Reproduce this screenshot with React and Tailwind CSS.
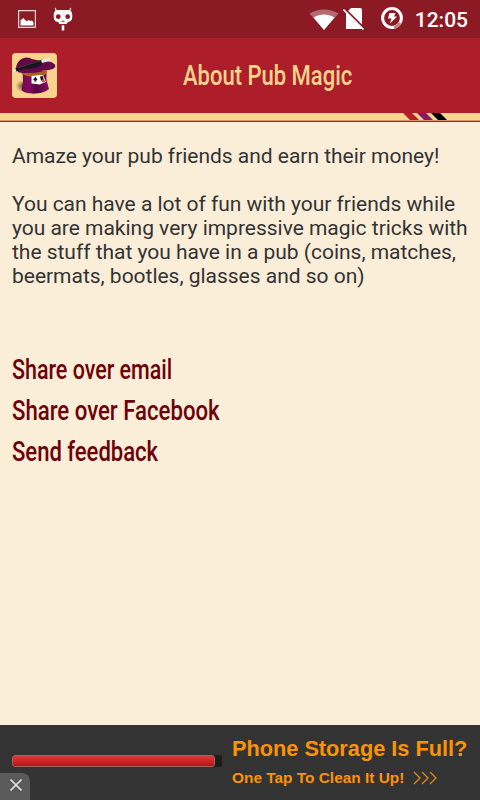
import clsx from "clsx";

const links = [
  { label: "Share over email", stretch: "scale-x-[0.767]" },
  { label: "Share over Facebook", stretch: "scale-x-[0.793]" },
  { label: "Send feedback", stretch: "scale-x-[0.788]" },
];

const HatLogo = () => (
  <svg viewBox="0 0 45 45" className="h-[45px] w-[45px] rounded-[4px] bg-[#f9d38c]">
    <defs>
      <linearGradient id="crown" x1="0" x2="1">
        <stop offset="0" stopColor="#6d0850" />
        <stop offset="0.25" stopColor="#850b62" />
        <stop offset="0.55" stopColor="#58063f" />
        <stop offset="1" stopColor="#870f64" />
      </linearGradient>
      <radialGradient id="shade">
        <stop offset="0" stopColor="#76532e" />
        <stop offset="1" stopColor="#f9d38c" />
      </radialGradient>
    </defs>
    <ellipse cx="10.500" cy="33" rx="7" ry="6" fill="url(#shade)" />
    <path d="M10.500 18 11 28 9.500 37C13 42 31 42 37 36L34.500 27V18Z" fill="url(#crown)" />
    <path d="M9 19C17 21 27 20 35 17L34 21C29 25 16 25 10 21Z" fill="#ab611f" />
    <path d="M4 15C5 7 12 3 18 5C22 8 32 7 39 9C46 12 44 16 37 17C25 18 13 22 6 19Z" fill="#650848" />
    <path d="M13 14C18 10 26 9 31 11C27 15 19 16 13 16Z" fill="#21102e" />
    <path d="M3 17.200 31 8" stroke="#151515" strokeWidth="3.200" />
    <path d="M6 15 29 7.500" stroke="#555" strokeWidth="0.600" />
    <path d="m29.500 8.500 8.500-2.300M1 18l3-1.200" stroke="#e8e6e8" strokeWidth="3" />
    <path d="m19.500 23 8.500-1v9.500l-8.500-1Z" fill="#fff" />
    <path d="m28 22 3 0 3 7-6.500 2.500Z" fill="#f4ecee" />
    <path d="m23.500 23.500 2 3.500-1.500.3.600 1.200h-2.600l.6-1.200-1.500-.3ZM28 23.500l3-.5.5 3.500-2.500 1Z" fill="#171717" />
    <path d="m29 27.500 3-1.500 1 3-2 .5Z" fill="#dd3f50" />
  </svg>
);

const PictureIcon = () => (
  <svg viewBox="0 0 18 18" className="h-[18px] w-[18px]">
    <path d="M.6.6h16.800v16.800H.6Z" fill="none" stroke="#efd9dc" strokeWidth="1.200" />
    <path d="M2.500 15.500V10.500L4 9 5.500 8l2 2.500 1.500.5L11 10l1 1 2-.5 1.500 2v3Z" fill="#fff" />
  </svg>
);

const CidIcon = () => (
  <svg viewBox="0 0 20 24" className="h-[24px] w-[20px]">
    <path d="M3.500 5 2.300.8M16.500 5l1.200-4.200" stroke="#f3dfe1" strokeWidth="1.200" />
    <path
      fillRule="evenodd"
      fill="#fff"
      d="M5 3h10c3 0 4.300 2 4.300 6s-1.300 5.500-4.300 6l-1.500 2h-7L5 15C2 14.500.7 13 .7 9S2 3 5 3ZM5.300 7.300a2.400 2.400 0 1 0 0 4.800 2.400 2.400 0 0 0 0-4.800Zm9.400 0a2.400 2.400 0 1 0 0 4.800 2.400 2.400 0 0 0 0-4.800ZM8.500 13.800v.9h3v-.9Z"
    />
    <path d="M10 18.300v5.200" stroke="#fff" strokeWidth="2.500" />
  </svg>
);

const WifiIcon = () => (
  <svg viewBox="0 0 30 21" className="h-[21px] w-[30px]">
    <path d="M.5 4.500C10-1 20-1 29.500 4.500L15 21Z" fill="#b36a71" />
    <path d="M4.500 8.500C11 4.500 19 4.500 25.500 8.500L15 21Z" fill="#fff" />
  </svg>
);

const NoSimIcon = () => (
  <svg viewBox="0 0 22 22" className="h-[22px] w-[22px]">
    <path d="M8 0h9q2 0 2 2v19H3V5Z" fill="#fff" />
    <path d="M1.500.5 22 21" stroke="#8b1a24" strokeWidth="2" />
    <path d="M.5 1.500 20.500 21.500" stroke="#fff" strokeWidth="1.600" />
  </svg>
);

const BatteryIcon = () => (
  <svg viewBox="0 0 22 22" className="h-[22px] w-[22px]">
    <circle cx="11" cy="11" r="9.400" fill="none" stroke="#fff" strokeWidth="3" />
    <path d="M13 20.300A9.400 9.400 0 0 0 19 16" fill="none" stroke="#bf8086" strokeWidth="3" />
    <path d="M8.500 6h6l-1.500 3.500h3L9 16.500l1.500-5H7Z" fill="#fff" />
  </svg>
);

const App = () => {
  return (
    <div className="flex h-[800px] w-[480px] flex-col overflow-hidden bg-[#fbeed9] font-['Roboto',sans-serif]">
      {/* Status bar */}
      <div className="flex h-[38px] shrink-0 items-center bg-[#8b1a24] pr-3 pl-[18px]">
        <PictureIcon />
        <div className="ml-[17px]">
          <CidIcon />
        </div>
        <div className="ml-auto flex items-center">
          <WifiIcon />
          <div className="ml-[4px]">
            <NoSimIcon />
          </div>
          <div className="mb-[2px] ml-[16px]">
            <BatteryIcon />
          </div>
          <span className="ml-[12px] pt-[2px] text-[21px] leading-[24px] font-medium text-white">
            12:05
          </span>
        </div>
      </div>

      {/* Header */}
      <div className="flex h-[75px] shrink-0 items-center bg-[#ae1e2a] pl-3">
        <HatLogo />
        <h1 className="ml-[126px] origin-left scale-x-[0.815] pt-[2px] text-[27px] font-medium whitespace-nowrap text-[#f9d38c]">
          About Pub Magic
        </h1>
      </div>
      <div className="shrink-0 border-b border-[#ae1e2a]">
        <div className="flex h-[8px] justify-end border-b border-[#dd946a] bg-[#f9d38c] pr-[33px]">
          <svg viewBox="0 0 44 7" className="h-[7px] w-[44px]">
            <path d="M0 0h9l7 7H7Z" fill="#b71f29" />
            <path d="M14 0h9l7 7h-9Z" fill="#86195f" />
            <path d="M28 0h9l7 7h-9Z" fill="#000" />
          </svg>
        </div>
      </div>

      {/* Description */}
      <div className="flex-1 px-3 pt-[22px] text-[21px] leading-[24px] tracking-[-0.02px] text-[#333]">
        <p>Amaze your pub friends and earn their money!</p>
        <p className="mt-6 whitespace-nowrap">
          You can have a lot of fun with your friends while
          <br />
          you are making very impressive magic tricks with
          <br />
          the stuff that you have in a pub (coins, matches,
          <br />
          beermats, bootles, glasses and so on)
        </p>
        <div className="mt-[61px] flex flex-col items-start">
          {links.map((link) => (
            <button
              key={link.label}
              className={clsx(
                "h-[41px] origin-left text-[28px] leading-[41px] font-medium whitespace-nowrap text-[#6d0208]",
                link.stretch
              )}
            >
              {link.label}
            </button>
          ))}
        </div>
      </div>

      {/* Ad banner */}
      <div className="relative flex h-[75px] shrink-0 bg-[#333] font-['Liberation_Sans',sans-serif] text-[#fb9405]">
        <div className="mt-[30px] ml-3 h-[12px] w-[210px] rounded-[2px] bg-[#1d1d1d]">
          <div className="h-full w-[203px] rounded-[3px] border border-[#a46464] bg-linear-to-b from-[#d93b3b] via-[#cf2525] to-[#b91212]" />
        </div>
        <div className="ml-[10px] whitespace-nowrap">
          <div className="mt-[11px] origin-left scale-x-[0.987] text-[22px] leading-[26px] font-bold">
            Phone Storage Is Full?
          </div>
          <div className="mt-[6px] flex items-center">
            <span className="origin-left scale-x-[1.027] text-[15px] leading-[20px] font-bold">
              One Tap To Clean It Up!
            </span>
            <svg viewBox="0 0 24 14" className="ml-[13px] h-[14px] w-[24px]">
              <path
                d="m1 1 6 6-6 6M9 1l6 6-6 6M17 1l6 6-6 6"
                fill="none"
                stroke="#d98513"
                strokeWidth="1.400"
              />
            </svg>
          </div>
        </div>
        <button className="absolute bottom-0 left-0 flex h-[27px] w-[30px] items-center justify-center rounded-tr-[8px] bg-[#5a5a5a]">
          <svg viewBox="0 0 12 12" className="mb-[3px] ml-[1px] h-[12px] w-[12px]">
            <path d="m.5.5 11 11M11.500.5.5 11.500" stroke="#ddd" strokeWidth="1.600" />
          </svg>
        </button>
      </div>
    </div>
  );
};

export default App;
